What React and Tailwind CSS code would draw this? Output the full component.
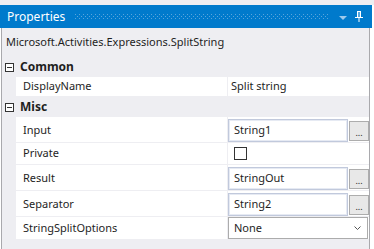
import React from 'react';

const Dots = () => (
  <svg className="flex-1 h-[5px] mx-[10px]" preserveAspectRatio="none">
    <defs>
      <pattern id="dots" width="4" height="4" patternUnits="userSpaceOnUse">
        <rect x="0" y="0" width="1" height="1" fill="#59a5dc" />
        <rect x="2" y="2" width="1" height="1" fill="#59a5dc" />
      </pattern>
    </defs>
    <rect width="100%" height="100%" fill="url(#dots)" />
  </svg>
);

const Minus = () => (
  <div className="w-[9px] h-[9px] border border-[#333] bg-white flex items-center justify-center">
    <div className="w-[5px] h-[1px] bg-[#333]" />
  </div>
);

const Category = ({ name }) => (
  <div className="h-[20px] flex items-center pl-[3px] gap-[6px]">
    <Minus />
    <span className="font-bold text-[12px] text-[#1e1e1e]">{name}</span>
  </div>
);

const Row = ({ label, h, children, pad = '' }) => (
  <div className={`flex ${h} border-b border-[#eeeef2]`}>
    <div className="w-[14px] bg-[#eeeef2]" />
    <div className={`w-[211px] bg-white flex items-center pl-[7px] ${pad}`}>{label}</div>
    <div className="w-[1px] bg-[#eeeef2]" />
    <div className="flex-1 bg-white flex items-center">{children}</div>
  </div>
);

const TextBox = ({ value }) => (
  <div className="flex items-center h-full pt-[2px] gap-[1px]">
    <div className="w-[120px] h-[23px] border border-[#c1c9dc] shadow-[inset_0_0_0_1px_#e6eaf3] flex items-center pl-[5px]">
      {value}
    </div>
    <div className="w-[20px] h-[20px] border border-[#adadad] bg-[#e8e8e8] flex items-end justify-center pb-[3px]">
      <span className="text-[9px] leading-none">...</span>
    </div>
  </div>
);

export default function App() {
  return (
    <div className="w-[374px] h-[249px] bg-white overflow-hidden font-['Noto_Sans',sans-serif] text-[11px] text-[#1e1e1e]">
      <div className="h-[5px] bg-[#eeeef2]" />
      <div className="w-[372px] h-[23px] bg-[#007acc] flex items-center pl-[7px] pr-[9px]">
        <span className="text-white text-[12px]">Properties</span>
        <Dots />
        <svg width="8" height="4" className="mt-[3px] mr-[8px]" viewBox="0 0 8 4">
          <path d="M0 0 H8 L4 4 Z" fill="#9cc9ec" />
        </svg>
        <svg width="8" height="11" viewBox="0 0 8 11">
          <path d="M0 6.5 H8 M2.5 0.5 V6 M5.5 0.5 V6 M2 0.5 H6 M4 7 V11" stroke="#ffffff" strokeWidth="1" fill="none" />
          <rect x="2.5" y="1" width="3" height="5" fill="#ffffff" opacity="0.35" />
        </svg>
      </div>
      <div className="ml-[1px] w-[369px] h-[221px] border-l border-r border-[#a9a9ad] bg-[#eeeef2]">
        <div className="h-[29px] flex items-center pl-[4px] pb-[1px] text-[11px]">
          Microsoft.Activities.Expressions.SplitString
        </div>
        <Category name="Common" />
        <Row label="DisplayName" h="h-[20px]">
          <span className="pl-[3px]">Split string</span>
        </Row>
        <Category name="Misc" />
        <Row label="Input" h="h-[26px]" pad="pt-[2px]">
          <TextBox value="String1" />
        </Row>
        <Row label="Private" h="h-[22px]">
          <div className="ml-[6px] w-[13px] h-[13px] border border-[#333] bg-white" />
        </Row>
        <Row label="Result" h="h-[26px]" pad="pt-[2px]">
          <TextBox value="StringOut" />
        </Row>
        <Row label="Separator" h="h-[26px]" pad="pt-[2px]">
          <TextBox value="String2" />
        </Row>
        <Row label="StringSplitOptions" h="h-[23px]">
          <div className="w-[140px] h-[22px] border border-[#acacac] bg-white flex items-center pl-[5px] pr-[6px]">
            <span className="flex-1">None</span>
            <svg width="7" height="4" viewBox="0 0 7 4">
              <path d="M0.5 0.5 L3.5 3.5 L6.5 0.5" stroke="#555" strokeWidth="1" fill="none" />
            </svg>
          </div>
        </Row>
      </div>
    </div>
  );
}
